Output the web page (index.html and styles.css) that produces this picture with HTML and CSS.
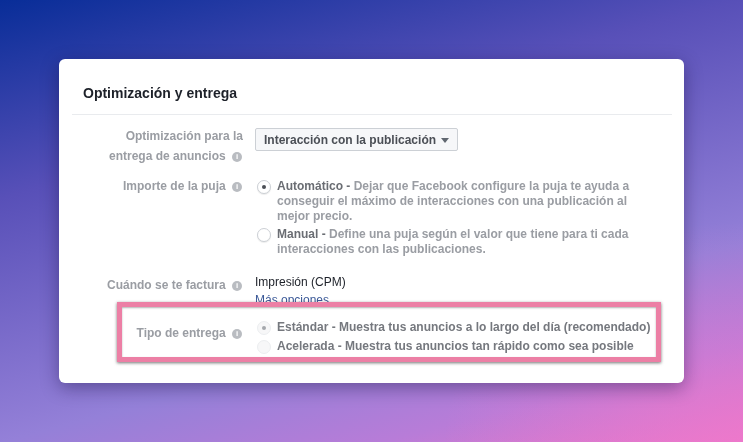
FILE: index.html
```html
<!DOCTYPE html>
<html>
<head>
    <title>Optimización y entrega</title>
    <link rel="stylesheet" href="styles.css">
</head>
<body>
    <div class="card">
        <h2 class="title">Optimización y entrega</h2>
        <div class="divider"></div>

        <div class="row row-opt">
            <div class="label">Optimización para la<br>entrega de anuncios <span class="info">i</span></div>
            <div class="control">
                <button class="select">Interacción con la publicación <span class="caret"></span></button>
            </div>
        </div>

        <div class="row row-bid">
            <div class="label label-bid">Importe de la puja <span class="info">i</span></div>
            <div class="control control-bid">
                <div class="option">
                    <span class="radio checked"></span>
                    <p class="option-text"><b>Automático -</b> Dejar que Facebook configure la puja te ayuda a<br>conseguir el máximo de interacciones con una publicación al<br>mejor precio.</p>
                </div>
                <div class="option option-manual">
                    <span class="radio"></span>
                    <p class="option-text"><b>Manual -</b> Define una puja según el valor que tiene para ti cada<br>interacciones con las publicaciones.</p>
                </div>
            </div>
        </div>

        <div class="row row-bill">
            <div class="label">Cuándo se te factura <span class="info">i</span></div>
            <div class="control">
                <div class="plain">Impresión (CPM)</div>
                <a class="more" href="#">Más opciones</a>
            </div>
        </div>

        <div class="row row-type">
            <div class="label label-type">Tipo de entrega <span class="info">i</span></div>
            <div class="control">
                <div class="option">
                    <span class="radio faded checked"></span>
                    <p class="option-dark">Estándar - Muestra tus anuncios a lo largo del día (recomendado)</p>
                </div>
                <div class="option option-fast">
                    <span class="radio faded"></span>
                    <p class="option-dark">Acelerada - Muestra tus anuncios tan rápido como sea posible</p>
                </div>
            </div>
        </div>

        <div class="highlight"></div>
    </div>
</body>
</html>
```

FILE: styles.css
```css
html, body {
    margin: 0;
    height: 442px;
    overflow: hidden;
}

body {
    padding: 59px;
    box-sizing: border-box;
    font-family: "Liberation Sans", Arial, sans-serif;
    background:
        radial-gradient(ellipse 300px 220px at 100% 100%, rgba(238,120,205,0.6) 0%, rgba(238,120,205,0) 100%),
        linear-gradient(165deg, #082d98 0%, #5850b8 31%, #9480d8 69%, #b87cd8 85%, #ec78c8 100%);
}

.card {
    position: relative;
    width: 625px;
    height: 324px;
    background: #fff;
    border-radius: 6px;
    box-shadow: 0 5px 18px rgba(20,10,60,0.4);
    filter: blur(0.4px);
}

.title {
    margin: 0;
    padding: 26px 0 0 24px;
    font-size: 14px;
    line-height: 17px;
    font-weight: bold;
    color: #1d2129;
}

.divider {
    margin: 12px 12px 0 13px;
    height: 1px;
    background: #e9ebee;
}

.row {
    display: flex;
}

.label {
    width: 184px;
    flex: none;
    text-align: right;
    font-size: 12px;
    line-height: 20px;
    font-weight: bold;
    color: #9a9da3;
}

.control {
    margin-left: 12px;
}

.info {
    display: inline-block;
    width: 10px;
    height: 10px;
    margin: 0 1px 0 3px;
    border-radius: 50%;
    background: #b9bcc1;
    color: #fff;
    font-size: 8px;
    line-height: 10px;
    text-align: center;
    vertical-align: 1px;
}

.row-opt {
    padding-top: 11px;
}

.select {
    display: block;
    height: 23px;
    margin-top: 2px;
    padding: 0 8px;
    border: 1px solid #ccd0d5;
    border-radius: 2px;
    background: #f6f7f9;
    font-family: inherit;
    font-size: 12px;
    font-weight: bold;
    color: #4b4f56;
}

.caret {
    display: inline-block;
    margin-left: 2px;
    border-left: 4.5px solid transparent;
    border-right: 4.5px solid transparent;
    border-top: 5px solid #606770;
    vertical-align: 1px;
}

.row-bid {
    padding-top: 9px;
}

.label-bid {
    padding-top: 1px;
}

.control-bid {
    padding-top: 4px;
}

.option {
    display: flex;
}

.radio {
    position: relative;
    flex: none;
    width: 12px;
    height: 12px;
    margin: 1px 6px 0 2px;
    border: 1px solid #ccd0d5;
    border-radius: 50%;
    background: #fff;
    box-shadow: 0 1px 1px rgba(0,0,0,0.08);
}

.radio.checked::after {
    content: "";
    position: absolute;
    left: 4px;
    top: 4px;
    width: 4px;
    height: 4px;
    border-radius: 50%;
    background: #4b4f56;
}

.radio.faded {
    border-color: #eceef0;
    background: #f7f7f8;
    box-shadow: none;
}

.radio.faded.checked::after {
    background: #a5a8ad;
}

.option-text {
    margin: 0;
    font-size: 12px;
    line-height: 15px;
    font-weight: bold;
    color: #9a9da3;
}

.option-text b {
    color: #6a6d73;
}

.option-manual {
    margin-top: 3px;
}

.row-bill {
    padding-top: 18px;
}

.plain {
    font-size: 12px;
    line-height: 15px;
    color: #1d2129;
}

.more {
    display: block;
    margin-top: 3px;
    font-size: 12px;
    line-height: 15px;
    color: #3b5998;
    text-decoration: none;
}

.row-type {
    padding-top: 12px;
}

.label-type {
    padding-top: 3px;
}

.option-dark {
    margin: 0;
    font-size: 12px;
    line-height: 15px;
    font-weight: bold;
    color: #75787e;
}

.option-fast {
    margin-top: 4px;
}

.highlight {
    position: absolute;
    left: 58px;
    top: 243px;
    width: 534px;
    height: 50px;
    border: 5px solid #ec7fa5;
    box-shadow: 0 1px 3px rgba(0,0,0,0.55), inset 0 1px 2px rgba(0,0,0,0.3);
}
```
